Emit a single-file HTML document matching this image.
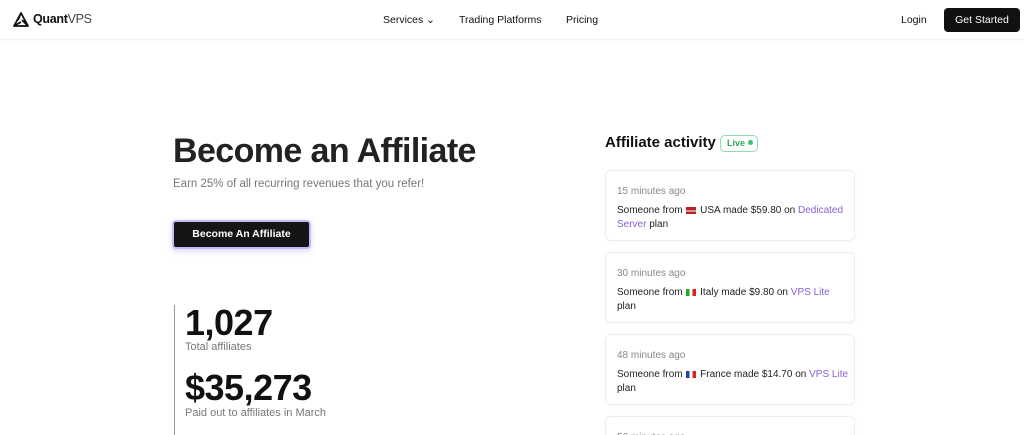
<!DOCTYPE html>
<html><head><meta charset="utf-8"><style>
*{margin:0;padding:0;box-sizing:border-box}
html,body{width:1024px;height:435px;overflow:hidden}
body{background:#fff;font-family:"Liberation Sans",sans-serif;color:#111;position:relative}
.nav{position:absolute;top:0;left:0;width:1024px;height:40px;border-bottom:1px solid #f0f0f0;box-shadow:0 1px 4px rgba(0,0,0,.03)}
.a{position:absolute;white-space:nowrap}
.card{position:absolute;left:605px;width:250px;height:71px;border:1px solid #eee;border-radius:6px;box-shadow:0 1px 3px rgba(0,0,0,.04);padding:14px 8px 0 11px;font-size:10px;line-height:14px;color:#222;white-space:nowrap;overflow:hidden}
.card .t{color:#888;margin-bottom:5px}
.p{color:#8a5fd6}
.f{display:inline-block;width:10px;height:7px;vertical-align:-1px;margin:0 1px}
</style></head><body>
<div class="nav">
<svg class="a" style="left:12px;top:11px" width="18" height="17" viewBox="0 0 18 17"><path d="M9 2 L2 15 H16 Z M9 2 L6 9 M2 15 L9 11 M16 15 L10 9" fill="none" stroke="#111" stroke-width="1.8" stroke-linejoin="round"/></svg>
<div class="a" style="left:33px;top:12px;font-size:12.5px;font-weight:bold;letter-spacing:-.3px">Quant<span style="font-weight:normal;color:#444">VPS</span></div>
<div class="a" style="left:383px;top:14px;font-size:10.5px">Services ⌄</div>
<div class="a" style="left:459px;top:14px;font-size:10.5px">Trading Platforms</div>
<div class="a" style="left:566px;top:14px;font-size:10.5px">Pricing</div>
<div class="a" style="left:901px;top:14px;font-size:10.5px">Login</div>
<div class="a" style="left:944px;top:8px;width:76px;height:24px;background:#111;color:#fff;border-radius:4px;font-size:10.5px;text-align:center;line-height:24px">Get Started</div>
</div>
<div class="a" style="left:173px;top:132px;font-size:34px;font-weight:bold;letter-spacing:-.6px;color:#222">Become an Affiliate</div>
<div class="a" style="left:173px;top:178px;font-size:11.5px;color:#777">Earn 25% of all recurring revenues that you refer!</div>
<div class="a" style="left:172px;top:220px;width:139px;height:29px;background:#151515;border:2px solid #c8b8f5;border-radius:4px;color:#fff;font-size:10.5px;font-weight:bold;text-align:center;line-height:25px;box-shadow:0 2px 6px rgba(120,90,220,.25)">Become An Affiliate</div>
<div class="a" style="left:174px;top:305px;width:1px;height:130px;background:#999"></div>
<div class="a" style="left:185px;top:302px;font-size:36px;font-weight:bold;letter-spacing:-.5px">1,027</div>
<div class="a" style="left:185px;top:341px;font-size:11px;color:#777">Total affiliates</div>
<div class="a" style="left:185px;top:367px;font-size:36px;font-weight:bold;letter-spacing:-.5px">$35,273</div>
<div class="a" style="left:185px;top:407px;font-size:11px;color:#777">Paid out to affiliates in March</div>
<div class="a" style="left:605px;top:134px;font-size:15px;font-weight:bold">Affiliate activity</div>
<div class="a" style="left:720px;top:135px;width:38px;height:17px;border:1px solid #8fdcb0;border-radius:5px;color:#2eae62;font-size:9px;font-weight:bold;line-height:15px;padding-left:6px">Live <span style="display:inline-block;width:5px;height:5px;border-radius:50%;background:#3cc171;vertical-align:1px"></span></div>
<div class="card" style="top:170px"><div class="t">15 minutes ago</div>Someone from <span class="f" style="background:linear-gradient(#b22 0 50%,#fff 50% 65%,#b22 65%)"></span> USA made $59.80 on <span class="p">Dedicated</span><br><span class="p">Server</span> plan</div>
<div class="card" style="top:252px"><div class="t">30 minutes ago</div>Someone from <span class="f" style="background:linear-gradient(90deg,#2a2 33%,#fff 33% 66%,#d22 66%)"></span> Italy made $9.80 on <span class="p">VPS Lite</span><br>plan</div>
<div class="card" style="top:334px"><div class="t">48 minutes ago</div>Someone from <span class="f" style="background:linear-gradient(90deg,#24a 33%,#fff 33% 66%,#d22 66%)"></span> France made $14.70 on <span class="p">VPS Lite</span><br>plan</div>
<div class="card" style="top:416px;height:19px;border-bottom:none;border-radius:6px 6px 0 0"><div class="t">56 minutes ago</div></div>
</body></html>
